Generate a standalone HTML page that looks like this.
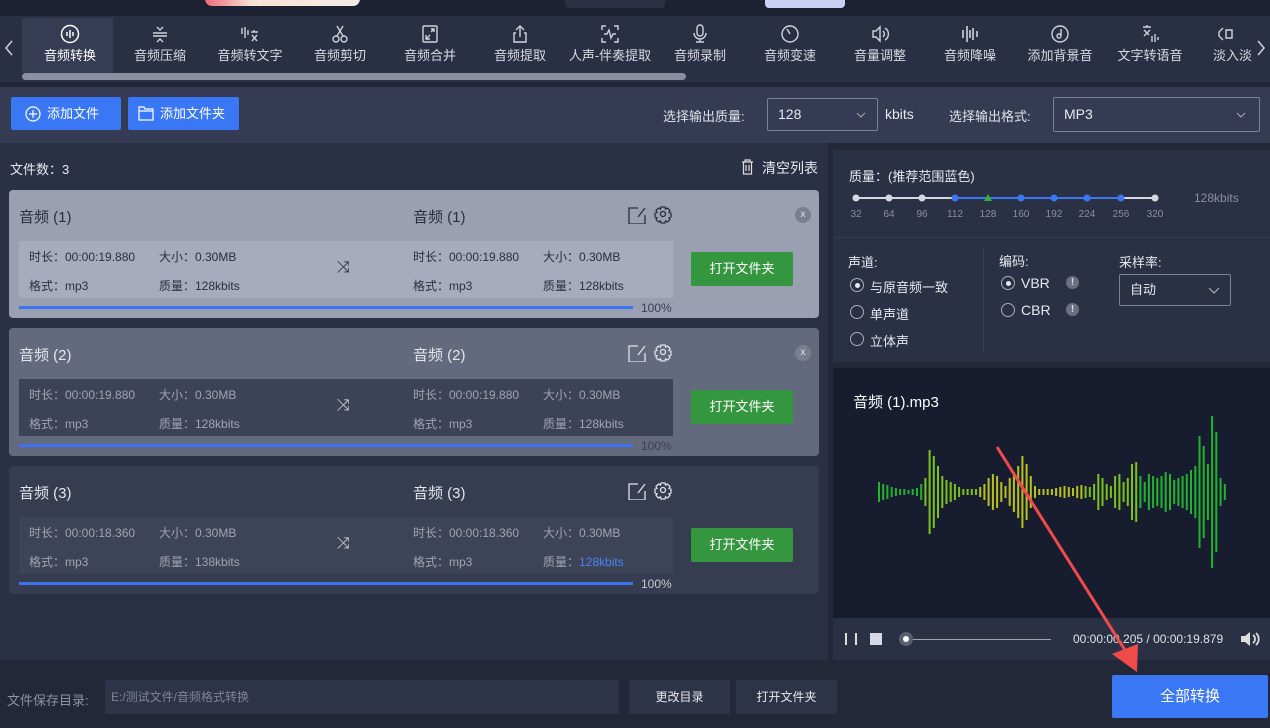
<!DOCTYPE html>
<html><head><meta charset="utf-8"><style>
*{margin:0;padding:0;box-sizing:border-box}
body{width:1270px;height:728px;overflow:hidden;background:#232839;font-family:"Liberation Sans","Noto Sans CJK SC",sans-serif;color:#e6e8ef;position:relative;font-size:13px}
.a{position:absolute}
.tab{position:absolute;top:16px;width:90px;height:60px;text-align:center;color:#d7dae3;font-size:13px}
.tab .t{position:absolute;top:29px;left:-10px;right:-10px;white-space:nowrap}
.tab svg{position:absolute;top:8px;left:35px}
.btn{position:absolute;background:#3a77f5;color:#fff;border-radius:2px;font-size:13px;line-height:33px}
.sel{position:absolute;border:1px solid #7c8193;border-radius:2px;color:#e6e8ef;font-size:14px;line-height:31px;padding-left:10px}
.chev{position:absolute;top:50%;margin-top:-3px}
.card{position:absolute;left:9px;width:810px;height:128px;border-radius:4px}
.card .h{position:absolute;top:16px;font-size:15px}
.card .in{position:absolute;left:10px;top:51px;width:654px;height:57px}
.card .in span{position:absolute;font-size:12px;white-space:nowrap}
.card .bar{position:absolute;left:10px;top:116px;width:614px;height:3px;background:#3b73f0}
.card .pct{position:absolute;left:632px;top:111px;font-size:12px}
.card .open{position:absolute;left:682px;top:62px;width:102px;height:34px;background:#34963f;color:#fff;text-align:center;line-height:34px;font-size:13px;border-radius:2px}
.card .x{position:absolute;left:786px;top:17px;width:16px;height:16px;border-radius:50%;background:#7a7f90;color:#dfe2ea;font-size:10px;text-align:center;line-height:16px}
.radio{position:absolute;width:14px;height:14px;border:1px solid #a9adb9;border-radius:50%}
.radio.on::after{content:"";position:absolute;left:3.5px;top:3.5px;width:5px;height:5px;border-radius:50%;background:#e6e8ef}
</style></head><body>
<div class="a" style="left:0;top:0;width:1270px;height:16px;background:#1d2233"></div>
<div class="a" style="left:205px;top:-8px;width:155px;height:14px;border-radius:7px;background:linear-gradient(90deg,#f06a78,#f7e2d6 30%,#f3ece6)"></div>
<div class="a" style="left:565px;top:-4px;width:100px;height:12px;border-radius:4px;background:#2b3142"></div>
<div class="a" style="left:765px;top:-4px;width:80px;height:12px;border-radius:4px;background:#c9d0f5"></div>
<div class="a" style="left:0;top:16px;width:1270px;height:66px;background:#2a3043"></div>
<div class="a" style="left:22px;top:18px;width:91px;height:55px;background:#353c53"></div>
<div class="a" style="left:22px;top:73px;width:664px;height:7px;border-radius:4px;background:#8c8fa2"></div>
<svg class="a" style="left:4px;top:40px" width="10" height="16" fill="none" stroke="#c9ccd6" stroke-width="1.6"><path d="M8 1L2 8l6 7"/></svg>
<svg class="a" style="left:1256px;top:40px" width="10" height="16" fill="none" stroke="#c9ccd6" stroke-width="1.6"><path d="M2 1l6 7-6 7"/></svg>

<div class="tab" style="left:25px"><svg width="20" height="20" viewBox="0 0 20 20" fill="none" stroke="#fff" stroke-width="1.5"><circle cx="10" cy="10" r="8.5"/><path d="M7 8v4M10 6v8M13 8v4"/></svg><div class="t" style="color:#fff">音频转换</div></div>
<div class="tab" style="left:115px"><svg width="20" height="20" viewBox="0 0 20 20" fill="none" stroke="#cfd2dc" stroke-width="1.4"><path d="M3 9h14M3 12h14M7 3l3 3 3-3M7 18l3-3 3 3"/></svg><div class="t">音频压缩</div></div>
<div class="tab" style="left:205px"><svg width="20" height="20" viewBox="0 0 20 20" fill="none" stroke="#cfd2dc" stroke-width="1.4"><path d="M2 4v6M5 3v11M8 6v5M11 8h7M14 6v2M12 11l5 6M17 11l-5 6"/></svg><div class="t">音频转文字</div></div>
<div class="tab" style="left:295px"><svg width="20" height="20" viewBox="0 0 20 20" fill="none" stroke="#cfd2dc" stroke-width="1.4"><circle cx="6" cy="15" r="3"/><circle cx="14" cy="15" r="3"/><path d="M7 12L13 2M13 12L7 2"/></svg><div class="t">音频剪切</div></div>
<div class="tab" style="left:385px"><svg width="20" height="20" viewBox="0 0 20 20" fill="none" stroke="#cfd2dc" stroke-width="1.4"><rect x="3" y="2" width="14" height="16" rx="1"/><path d="M6 15l4-4M6 11v4h4M14 5l-3 3M14 8V5h-3"/></svg><div class="t">音频合并</div></div>
<div class="tab" style="left:475px"><svg width="20" height="20" viewBox="0 0 20 20" fill="none" stroke="#cfd2dc" stroke-width="1.4"><path d="M6 9H4v9h12V9h-2M10 13V2M6 6l4-4 4 4"/></svg><div class="t">音频提取</div></div>
<div class="tab" style="left:565px"><svg width="20" height="20" viewBox="0 0 20 20" fill="none" stroke="#cfd2dc" stroke-width="1.4"><path d="M2 6V2h4M14 2h4v4M2 14v4h4M18 14v4h-4M4 10h3l2-4 2 8 2-4h3"/></svg><div class="t">人声-伴奏提取</div></div>
<div class="tab" style="left:655px"><svg width="20" height="20" viewBox="0 0 20 20" fill="none" stroke="#cfd2dc" stroke-width="1.4"><rect x="7" y="1" width="6" height="11" rx="3"/><path d="M4 9a6 6 0 0012 0M10 15v3M6 18h8"/></svg><div class="t">音频录制</div></div>
<div class="tab" style="left:745px"><svg width="20" height="20" viewBox="0 0 20 20" fill="none" stroke="#cfd2dc" stroke-width="1.4"><circle cx="10" cy="10" r="8"/><path d="M10 10L7 5"/></svg><div class="t">音频变速</div></div>
<div class="tab" style="left:835px"><svg width="20" height="20" viewBox="0 0 20 20" fill="none" stroke="#cfd2dc" stroke-width="1.4"><path d="M3 7h3l4-4v14l-4-4H3zM13 7a4 4 0 010 6M15 4a7 7 0 010 12"/></svg><div class="t">音量调整</div></div>
<div class="tab" style="left:925px"><svg width="20" height="20" viewBox="0 0 20 20" fill="none" stroke="#cfd2dc" stroke-width="1.6"><path d="M3 6v8M7 2v16M10 6v8M13 4v12M17 7v6"/></svg><div class="t">音频降噪</div></div>
<div class="tab" style="left:1015px"><svg width="20" height="20" viewBox="0 0 20 20" fill="none" stroke="#cfd2dc" stroke-width="1.4"><circle cx="10" cy="10" r="8"/><circle cx="9" cy="12" r="2"/><path d="M11 12V5"/></svg><div class="t">添加背景音</div></div>
<div class="tab" style="left:1105px"><svg width="20" height="20" viewBox="0 0 20 20" fill="none" stroke="#cfd2dc" stroke-width="1.4"><path d="M3 3h8M7 1v2M4 6l5 5M10 6l-6 6M12 12v6M15 10v8M18 13v3"/></svg><div class="t">文字转语音</div></div>
<div class="tab" style="left:1195px;width:58px;overflow:hidden"><svg width="20" height="20" viewBox="0 0 20 20" fill="none" stroke="#cfd2dc" stroke-width="1.4" style="left:22px"><path d="M6 4l-4 4v4l4 4M9 6h6v8H9z"/></svg><div class="t" style="left:18px;text-align:left">淡入淡出</div></div>

<div class="a" style="left:0;top:82px;width:1270px;height:5px;background:#22273a"></div>
<div class="a" style="left:0;top:87px;width:1270px;height:56px;background:#343b52"></div>
<div class="btn" style="left:11px;top:97px;width:110px;height:33px"><svg class="a" style="left:14px;top:9px" width="16" height="16" viewBox="0 0 16 16" fill="none" stroke="#fff" stroke-width="1.2"><circle cx="8" cy="8" r="7"/><path d="M8 4v8M4 8h8"/></svg><span class="a" style="left:36px">添加文件</span></div>
<div class="btn" style="left:128px;top:97px;width:111px;height:33px"><svg class="a" style="left:10px;top:9px" width="16" height="15" viewBox="0 0 16 15" fill="none" stroke="#fff" stroke-width="1.2"><path d="M1 1h5l1 2h8v11H1zM1 5h14"/></svg><span class="a" style="left:32px">添加文件夹</span></div>
<div class="a" style="left:663px;top:106px;font-size:13px;color:#dfe2ea">选择输出质量:</div>
<div class="sel" style="left:767px;top:98px;width:111px;height:33px">128<svg class="chev" style="left:88px" width="10" height="6" fill="none" stroke="#aaa"><path d="M1 1l4 4 4-4"/></svg></div>
<div class="a" style="left:885px;top:106px;font-size:14px">kbits</div>
<div class="a" style="left:949px;top:106px;font-size:13px;color:#dfe2ea">选择输出格式:</div>
<div class="sel" style="left:1053px;top:97px;width:207px;height:35px;line-height:33px">MP3<svg class="chev" style="left:182px" width="10" height="6" fill="none" stroke="#aaa"><path d="M1 1l4 4 4-4"/></svg></div>

<div class="a" style="left:0;top:143px;width:828px;height:517px;background:#2b3145"></div>
<div class="a" style="left:10px;top:159px;font-size:13px">文件数：3</div>
<svg class="a" style="left:741px;top:159px" width="13" height="16" fill="none" stroke="#ddd" stroke-width="1.2"><path d="M1 3h11M4 3V1h5v2M2.5 3v12h8V3M5 6v6M8 6v6"/></svg>
<div class="a" style="left:762px;top:158px;font-size:14px">清空列表</div>

<div class="card" style="top:190px;background:#9a9fb2;color:#2a2f3c">
 <div class="h" style="left:10px">音频 (1)</div><div class="h" style="left:404px">音频 (1)</div>
 <svg class="a" style="left:619px;top:16px" width="44" height="18" fill="none" stroke="#2a2f3c" stroke-width="1.3"><path d="M10 2H1v16h16V9M10 11L17 2"/><circle cx="35" cy="8" r="2.5"/><path d="M33 1h4l.5 2 2-1 2.5 2.5-1 2 2 .5v4l-2 .5 1 2-2.5 2.5-2-1-.5 2h-4l-.5-2-2 1-2.5-2.5 1-2-2-.5v-4l2-.5-1-2L30.5 2l2 1z"/></svg>
 <div class="x">x</div>
 <div class="in" style="background:#a6abbd"><span style="left:10px;top:7px">时长：00:00:19.880</span><span style="left:140px;top:7px">大小：0.30MB</span><span style="left:10px;top:36px">格式：mp3</span><span style="left:140px;top:36px">质量：128kbits</span><span style="left:318px;top:18px;font-size:16px">⤨</span><span style="left:394px;top:7px">时长：00:00:19.880</span><span style="left:524px;top:7px">大小：0.30MB</span><span style="left:394px;top:36px">格式：mp3</span><span style="left:524px;top:36px">质量：128kbits</span></div>
 <div class="bar"></div><div class="pct" style="color:#3b4050">100%</div><div class="open">打开文件夹</div>
</div>
<div class="card" style="top:328px;background:#646a7e;color:#e3e5ec">
 <div class="h" style="left:10px">音频 (2)</div><div class="h" style="left:404px">音频 (2)</div>
 <svg class="a" style="left:619px;top:16px" width="44" height="18" fill="none" stroke="#dfe2ea" stroke-width="1.3"><path d="M10 2H1v16h16V9M10 11L17 2"/><circle cx="35" cy="8" r="2.5"/><path d="M33 1h4l.5 2 2-1 2.5 2.5-1 2 2 .5v4l-2 .5 1 2-2.5 2.5-2-1-.5 2h-4l-.5-2-2 1-2.5-2.5 1-2-2-.5v-4l2-.5-1-2L30.5 2l2 1z"/></svg>
 <div class="x">x</div>
 <div class="in" style="background:#3d4356;color:#9fa4b3"><span style="left:10px;top:7px">时长：00:00:19.880</span><span style="left:140px;top:7px">大小：0.30MB</span><span style="left:10px;top:36px">格式：mp3</span><span style="left:140px;top:36px">质量：128kbits</span><span style="left:318px;top:18px;font-size:16px;color:#ccc">⤨</span><span style="left:394px;top:7px">时长：00:00:19.880</span><span style="left:524px;top:7px">大小：0.30MB</span><span style="left:394px;top:36px">格式：mp3</span><span style="left:524px;top:36px">质量：128kbits</span></div>
 <div class="bar"></div><div class="pct" style="color:#3b4050">100%</div><div class="open">打开文件夹</div>
</div>
<div class="card" style="top:466px;background:#373d51;color:#e3e5ec">
 <div class="h" style="left:10px">音频 (3)</div><div class="h" style="left:404px">音频 (3)</div>
 <svg class="a" style="left:619px;top:16px" width="44" height="18" fill="none" stroke="#dfe2ea" stroke-width="1.3"><path d="M10 2H1v16h16V9M10 11L17 2"/><circle cx="35" cy="8" r="2.5"/><path d="M33 1h4l.5 2 2-1 2.5 2.5-1 2 2 .5v4l-2 .5 1 2-2.5 2.5-2-1-.5 2h-4l-.5-2-2 1-2.5-2.5 1-2-2-.5v-4l2-.5-1-2L30.5 2l2 1z"/></svg>
 <div class="in" style="background:#3e4457;color:#9fa4b3"><span style="left:10px;top:7px">时长：00:00:18.360</span><span style="left:140px;top:7px">大小：0.30MB</span><span style="left:10px;top:36px">格式：mp3</span><span style="left:140px;top:36px">质量：138kbits</span><span style="left:318px;top:18px;font-size:16px;color:#ccc">⤨</span><span style="left:394px;top:7px">时长：00:00:18.360</span><span style="left:524px;top:7px">大小：0.30MB</span><span style="left:394px;top:36px">格式：mp3</span><span style="left:524px;top:36px">质量：<b style="font-weight:normal;color:#4a82f5">128kbits</b></span></div>
 <div class="bar"></div><div class="pct" style="color:#c6c9d3">100%</div><div class="open">打开文件夹</div>
</div>

<div class="a" style="left:833px;top:150px;width:437px;height:212px;background:#2b3145"></div>
<div class="a" style="left:833px;top:237px;width:437px;height:1px;background:#363c50"></div>
<div class="a" style="left:983px;top:248px;width:1px;height:104px;background:#3a4054"></div>
<div class="a" style="left:849px;top:166px;font-size:13px">质量：(推荐范围蓝色)</div>
<svg class="a" style="left:845px;top:188px" width="330" height="34">
 <line x1="11" y1="10" x2="110" y2="10" stroke="#d6d8e0" stroke-width="2"/>
 <line x1="110" y1="10" x2="276" y2="10" stroke="#3a77f5" stroke-width="2"/>
 <line x1="276" y1="10" x2="310" y2="10" stroke="#d6d8e0" stroke-width="2"/>
 <g fill="#d6d8e0"><circle cx="11" cy="10" r="3.5"/><circle cx="44" cy="10" r="3.5"/><circle cx="77" cy="10" r="3.5"/><circle cx="310" cy="10" r="3.5"/></g>
 <g fill="#3a77f5"><circle cx="110" cy="10" r="3.5"/><circle cx="176" cy="10" r="3.5"/><circle cx="209" cy="10" r="3.5"/><circle cx="242" cy="10" r="3.5"/><circle cx="276" cy="10" r="3.5"/></g>
 <path d="M139 13l4-7 4 7z" fill="#2fb52f"/>
 <g fill="#8a8fa0" font-size="10" font-family="Liberation Sans" text-anchor="middle"><text x="11" y="29">32</text><text x="44" y="29">64</text><text x="77" y="29">96</text><text x="110" y="29">112</text><text x="143" y="29">128</text><text x="176" y="29">160</text><text x="209" y="29">192</text><text x="242" y="29">224</text><text x="276" y="29">256</text><text x="310" y="29">320</text></g>
</svg>
<div class="a" style="left:1194px;top:191px;font-size:12px;color:#8a8fa0">128kbits</div>
<div class="a" style="left:848px;top:252px;font-size:13px">声道:</div>
<div class="radio on" style="left:850px;top:278px"></div><div class="a" style="left:870px;top:277px;font-size:13px">与原音频一致</div>
<div class="radio" style="left:850px;top:305px"></div><div class="a" style="left:870px;top:304px;font-size:13px">单声道</div>
<div class="radio" style="left:850px;top:332px"></div><div class="a" style="left:870px;top:331px;font-size:13px">立体声</div>
<div class="a" style="left:999px;top:251px;font-size:13px">编码:</div>
<div class="radio on" style="left:1001px;top:276px"></div><div class="a" style="left:1021px;top:275px;font-size:14px">VBR</div>
<div class="radio" style="left:1001px;top:303px"></div><div class="a" style="left:1021px;top:302px;font-size:14px">CBR</div>
<div class="a" style="left:1066px;top:276px;width:13px;height:13px;border-radius:50%;background:#6b7080;color:#d8dbe3;font-size:10px;text-align:center;line-height:13px;font-weight:bold">!</div>
<div class="a" style="left:1066px;top:303px;width:13px;height:13px;border-radius:50%;background:#6b7080;color:#d8dbe3;font-size:10px;text-align:center;line-height:13px;font-weight:bold">!</div>
<div class="a" style="left:1119px;top:252px;font-size:13px">采样率:</div>
<div class="sel" style="left:1119px;top:274px;width:112px;height:32px;line-height:30px;font-size:13px">自动<svg class="chev" style="left:88px" width="12" height="7" fill="none" stroke="#bbb"><path d="M1 1l5 5 5-5"/></svg></div>

<div class="a" style="left:833px;top:368px;width:437px;height:250px;background:#171c2f"></div>
<div class="a" style="left:853px;top:391px;font-size:15px;color:#fff">音频 (1).mp3</div>
<svg class="a" id="wv" style="left:833px;top:368px" width="437" height="250"></svg>
<div class="a" style="left:833px;top:618px;width:437px;height:42px;background:#2b3145"></div>
<div class="a" style="left:845px;top:633px;width:2px;height:12px;background:#ddd"></div>
<div class="a" style="left:855px;top:633px;width:2px;height:12px;background:#ddd"></div>
<div class="a" style="left:870px;top:633px;width:12px;height:12px;background:#d6d8e8"></div>
<div class="a" style="left:905px;top:639px;width:146px;height:1px;background:#a0a3ad"></div>
<div class="a" style="left:899px;top:632px;width:14px;height:14px;border-radius:50%;background:#5a5f70"></div>
<div class="a" style="left:903px;top:636px;width:6px;height:6px;border-radius:50%;background:#fff"></div>
<div class="a" style="left:1073px;top:632px;font-size:12px;color:#dfe2ea">00:00:00.205 / 00:00:19.879</div>
<svg class="a" style="left:1240px;top:631px" width="20" height="16"><path d="M1 5h4l5-4v14l-5-4H1z" fill="#ddd"/><path d="M13 4a5 5 0 010 8M16 2a8 8 0 010 12" stroke="#ddd" stroke-width="1.8" fill="none"/></svg>

<div class="a" style="left:7px;top:690px;font-size:13px;color:#8d92a3">文件保存目录:</div>
<div class="a" style="left:105px;top:680px;width:514px;height:34px;background:#2e3447;color:#7f8496;font-size:12px;line-height:34px;padding-left:6px">E:/测试文件/音频格式转换</div>
<div class="a" style="left:629px;top:680px;width:101px;height:34px;background:#2e3447;font-size:12px;line-height:34px;text-align:center">更改目录</div>
<div class="a" style="left:736px;top:680px;width:101px;height:34px;background:#2e3447;font-size:12px;line-height:34px;text-align:center">打开文件夹</div>
<div class="a" style="left:1112px;top:675px;width:156px;height:43px;background:#3a77f5;border-radius:2px;color:#fff;font-size:15px;line-height:43px;text-align:center">全部转换</div>

<svg class="a" style="left:0;top:0" width="1270" height="728"><line x1="997" y1="447" x2="1128" y2="655" stroke="#ef4b4b" stroke-width="3"/><path d="M1137 672l-25-18 26-10z" fill="#ef4b4b"/></svg>
<script>
var a=[10,8,7,5,4,3,3,2,3,4,8,14,42,36,26,16,12,10,8,5,3,3,3,3,5,8,14,18,16,10,6,14,20,26,36,28,16,6,3,3,3,3,4,5,6,5,4,6,7,6,5,8,18,14,8,6,16,18,10,14,28,30,16,10,18,16,14,16,20,18,12,14,16,18,22,26,56,46,28,76,60,14,8];
var s='',n=a.length;
for(var i=0;i<n;i++){var x=45+i*(350/n),h=a[i];var t=Math.abs(i-36)/36;var c=t<0.35?'#b9c21c':(t<0.7?'#7cc21f':'#22b330');s+='<rect x="'+x.toFixed(1)+'" y="'+(124-h)+'" width="2" height="'+(2*h)+'" fill="'+c+'"/>';}
document.getElementById('wv').innerHTML=s;
</script>
</body></html>
